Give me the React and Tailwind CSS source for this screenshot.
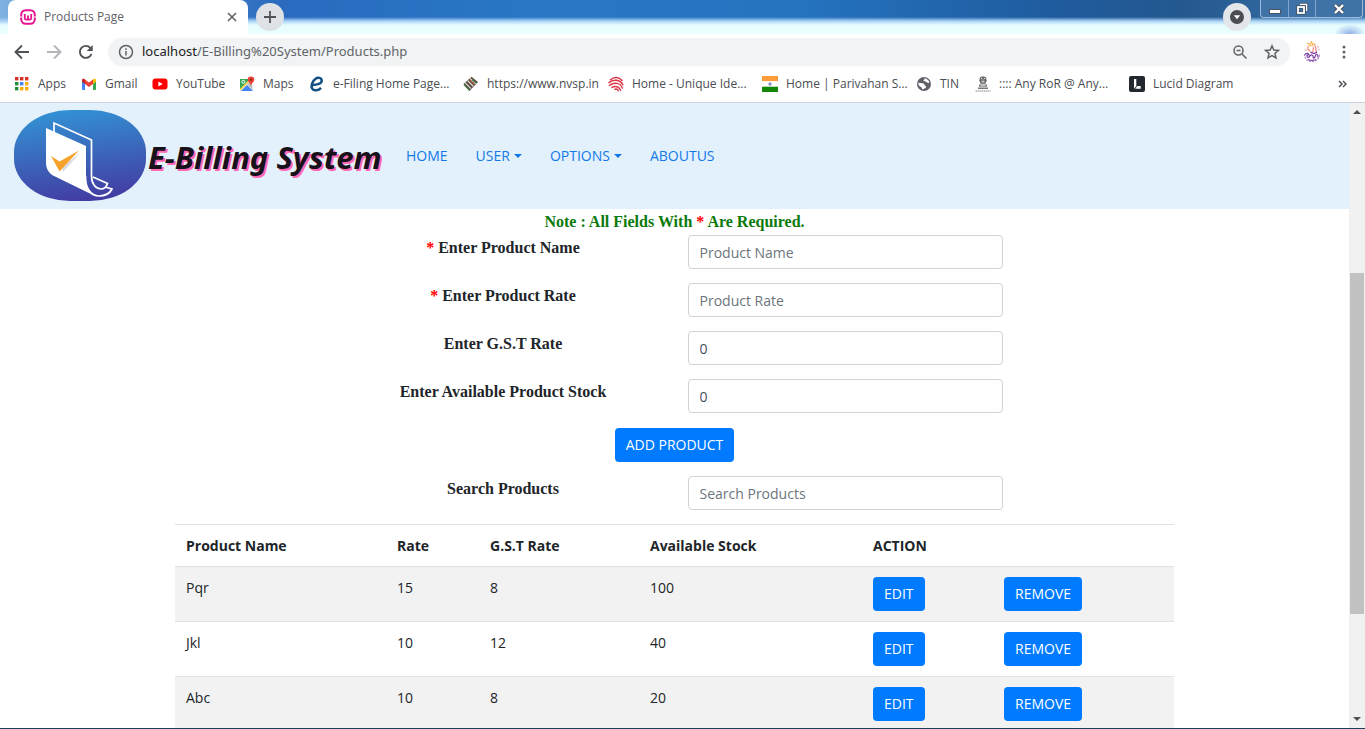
import React from "react";

const AppsIcon = () => (
  <svg viewBox="0 0 14 14" className="h-3.5 w-3.5">
    {["#d93025", "#d93025", "#d93025", "#1e8e3e", "#4285f4", "#f9ab00", "#1e8e3e", "#f9ab00", "#f9ab00"].map((c, i) => (
      <rect key={i} x={(i % 3) * 5} y={Math.floor(i / 3) * 5} width="3.4" height="3.4" fill={c} />
    ))}
  </svg>
);

const GmailIcon = () => (
  <svg viewBox="0 0 16 14" className="h-3.5 w-4">
    <path d="M1 3v9.2c0 .5.4.8.8.8H4V6z" fill="#4285f4" />
    <path d="M15 3v9.2c0 .5-.4.8-.8.8H12V6z" fill="#34a853" />
    <path d="M4 2.6V7l4 3 4-3V2.6L8 5.6z" fill="#ea4335" />
    <path d="M1 3v1.7L4 7V2.6l-.6-.5C2.4 1.3 1 1.9 1 3z" fill="#c5221f" />
    <path d="M15 3v1.7L12 7V2.6l.6-.5C13.6 1.3 15 1.9 15 3z" fill="#fbbc04" />
  </svg>
);

const YouTubeIcon = () => (
  <svg viewBox="0 0 16 12" className="h-3 w-4">
    <rect x="0.5" y="0.5" width="15" height="11" rx="3" fill="#f00" />
    <path d="M6.4 3.6v4.8l4.2-2.4z" fill="#fff" />
  </svg>
);

const MapsIcon = () => (
  <svg viewBox="0 0 16 16" className="h-4 w-4">
    <path d="M1 3h12v12H1z" fill="#e8eaed" />
    <path d="M1 3h10L1 13.5z" fill="#34a853" />
    <path d="M2 15 8 9l6 6z" fill="#4285f4" />
    <path d="M8 8.5 12.5 5 14 14z" fill="#bdc1c6" />
    <path d="M1 14 12 3" stroke="#fbd04b" strokeWidth="1.6" />
    <circle cx="4.3" cy="5.8" r="1.5" fill="none" stroke="#fff" />
    <path d="M12 .5a3.3 3.3 0 0 0-3.3 3.3C8.7 6 11.5 7 12 10c.5-3 3.3-4 3.3-6.2A3.3 3.3 0 0 0 12 .5z" fill="#ea4335" />
    <circle cx="12" cy="3.8" r="1.1" fill="#8c1d18" />
  </svg>
);

const EFilingIcon = () => (
  <svg viewBox="0 0 16 16" className="h-4 w-4">
    <path d="M3.5 9C8 9 12.800 7.700 12.700 4.600 12.600 1.500 8.800 1 6.300 3 3.300 5.200 1.600 9.800 3.200 12.600c1.700 2.700 6.300 2 8.800-.8" fill="none" stroke="#124f82" strokeWidth="2.5" />
  </svg>
);

const NvspIcon = () => (
  <svg viewBox="0 0 16 16" className="h-4 w-4">
    <path d="M.5 8 8.5.8 15 6 6.5 15z" fill="#5b5048" />
    <path d="M2 6.6 8 12.6M4.5 4.500l6 6M7 2.400l6 5.600" stroke="#e6e2da" strokeWidth="1.1" />
    <path d="m1 8.600 5.500 5.800M9 3.500l4 3.600" stroke="#3f7d46" strokeWidth="1.2" />
    <path d="m6.500 3.500 5 5" stroke="#d1492e" />
  </svg>
);

const AadhaarIcon = () => (
  <svg viewBox="0 0 16 16" className="h-4 w-4" fill="none" stroke="#dc3545" strokeWidth="1.5" strokeLinecap="round">
    <path d="M2.500 3.800C6 .5 11 .8 14 4.400M1 6.600C5.500 2.800 11.800 3.600 14.800 8.600M1.500 9.300C6.500 5.800 12.300 6.800 14.300 12M4 11.400c3.500-2 7.300-.6 8.500 2.800M7 13.200c1.600-.6 2.600 0 3.200 1.500" />
  </svg>
);

const FlagIcon = () => (
  <svg viewBox="0 0 16 16" className="h-4 w-4">
    <path d="M0 0h16v5.300H0z" fill="#ff9d3c" />
    <path d="M0 5.300h16v5.400H0z" fill="#fff" />
    <path d="M0 10.700h16V16H0z" fill="#138808" />
    <circle cx="8" cy="8" r="1.7" fill="#8a8fc4" />
  </svg>
);

const GlobeIcon = () => (
  <svg viewBox="0 0 16 16" className="h-4 w-4">
    <circle cx="8" cy="8" r="7" fill="#5f6368" />
    <path d="M2.300 6.500C4 7.600 6 6.700 7.600 7.500c1.500.8.3 2 1.800 2.300 1.200.2.9 1.800-.2 2.400-1.300.6-2.200 1.200-3.200.9.2-1.500-.8-2-2-2.600C2.800 9.900 2 8 2.300 6.500zM8.500 2.300c.3 1.500-1.300 1.600-.8 2.700.6 1 2.200.2 3.100 1.200.7.800 1.600.8 2.600.6C13 4.500 11 2.600 8.500 2.300z" fill="#fff" />
  </svg>
);

const EmblemIcon = () => (
  <svg viewBox="0 0 16 16" className="h-4 w-4">
    <path d="M5 1.500C6 .3 10 .3 11 1.500l.7 3-1.200 3.200h-5L4.300 4.500z" fill="#6c6c6c" />
    <path d="M6 2.500h1M9 2.500h1M7.500 4h1M6.500 5.800h3" stroke="#eee" />
    <path d="M4 8.500h8v2.300H4zM3 11.500h10V13H3z" fill="#777" />
    <path d="M5.500 9.700h5" stroke="#ddd" />
    <path d="M.5 15h15" stroke="#888" strokeDasharray="1.5 .5" />
  </svg>
);

const LucidIcon = () => (
  <svg viewBox="0 0 16 16" className="h-4 w-4">
    <rect width="16" height="16" rx="2" fill="#23272f" />
    <path d="M5 3h2.300v7L5 12.800zM8.200 10h3.500v2.800H6.200z" fill="#fff" />
  </svg>
);

const bookmarks = [
  { label: "Apps", Icon: AppsIcon, width: "w-[67px]" },
  { label: "Gmail", Icon: GmailIcon, width: "w-[71px]" },
  { label: "YouTube", Icon: YouTubeIcon, width: "w-[87px]" },
  { label: "Maps", Icon: MapsIcon, width: "w-[70px]" },
  { label: "e-Filing Home Page...", Icon: EFilingIcon, width: "w-[154px]" },
  { label: "https://www.nvsp.in", Icon: NvspIcon, width: "w-[145px]" },
  { label: "Home - Unique Ide...", Icon: AadhaarIcon, width: "w-[154px]" },
  { label: "Home | Parivahan S...", Icon: FlagIcon, width: "w-[154px]" },
  { label: "TIN", Icon: GlobeIcon, width: "w-[59px]" },
  { label: ":::: Any RoR @ Any...", Icon: EmblemIcon, width: "w-[154px]" },
  { label: "Lucid Diagram", Icon: LucidIcon, width: "w-[120px]" },
];

function TabStrip() {
  return (
    <div className="flex h-[34px] shrink-0 items-start justify-between bg-[radial-gradient(ellipse_16px_10px_at_1350px_34px,#8fb0e6,transparent),linear-gradient(to_bottom,#e6fdff00_17px,#a9d2f6_21px,#e6fdff_25px,#eaffff_33px),linear-gradient(to_right,#7fb0e0_0,#2a6bbf_280px,#2878c6_560px,#2573bf_800px,#1f5c9f_1050px,#24588f_1180px,#3c74aa_1365px)]">
      <div className="flex items-start pl-2">
        <div className="flex h-[34px] w-60 items-center rounded-t-lg bg-white pr-2.5 pl-3">
          <svg viewBox="0 0 16 16" className="h-4 w-4" fill="none" stroke="#e6128f">
            <rect x="1.2" y="1.2" width="13.6" height="13.6" rx="4.5" strokeWidth="2" />
            <path d="M4.800 5v4.200c0 2 3.200 2 3.200 0V6.500M8 9.200c0 2 3.200 2 3.200 0V5" strokeWidth="1.8" />
            <path d="M0 8h2.500M13.500 8H16" stroke="#fff" strokeWidth="1" />
          </svg>
          <span className="ml-2 flex-1 text-xs text-[#5f6368]">Products Page</span>
          <button aria-label="Close tab" className="flex h-3 w-3 items-center justify-center">
            <svg viewBox="0 0 10 10" className="h-2.5 w-2.5" stroke="#5f6368" strokeWidth="1.6">
              <path d="m1 1 8 8M9 1 1 9" />
            </svg>
          </button>
        </div>
        <button aria-label="New tab" className="mt-[3px] ml-2 flex h-7 w-7 items-center justify-center rounded-full bg-[#dee1e6]">
          <svg viewBox="0 0 12 12" className="h-3 w-3" stroke="#50545a" strokeWidth="1.8">
            <path d="M6 0v12M0 6h12" />
          </svg>
        </button>
      </div>
      <div className="flex items-start pr-0.5">
        <button aria-label="Search tabs" className="mt-[3px] mr-[9px] flex h-7 w-7 items-center justify-center rounded-full bg-[#e4e7ea]">
          <svg viewBox="0 0 14 14" className="h-3.5 w-3.5">
            <circle cx="7" cy="7" r="7" fill="#4a4d51" />
            <path d="M3.800 5.300h6.400L7 9.300z" fill="#fff" />
          </svg>
        </button>
        <div className="flex h-[18px] divide-x divide-[#7fa5cc] rounded-b border border-t-0 border-[#9dbbd9] bg-[#3f73a8]">
          <button aria-label="Minimize" className="flex w-7 items-center justify-center">
            <svg viewBox="0 0 12 12" className="h-3 w-3"><rect x=".5" y="6.5" width="11" height="4" fill="#fff" stroke="#4a5562" /></svg>
          </button>
          <button aria-label="Restore" className="flex w-[27px] items-center justify-center">
            <svg viewBox="0 0 12 12" className="h-3 w-3" fill="none">
              <path d="M4 1.500h6.500V8" stroke="#44505e" strokeWidth="3" /><path d="M4 1.500h6.500V8" stroke="#fff" strokeWidth="1.5" />
              <rect x="2" y="4" width="6" height="6" stroke="#44505e" strokeWidth="3.4" /><rect x="2" y="4" width="6" height="6" stroke="#fff" strokeWidth="1.8" />
            </svg>
          </button>
          <button aria-label="Close" className="flex w-[46px] items-center justify-center">
            <svg viewBox="0 0 12 12" className="h-3 w-3"><path d="m2 2 8 8M10 2l-8 8" stroke="#44505e" strokeWidth="4.2" /><path d="m2 2 8 8M10 2l-8 8" stroke="#fff" strokeWidth="2.4" /></svg>
          </button>
        </div>
      </div>
    </div>
  );
}

function Toolbar() {
  return (
    <div className="flex h-9 shrink-0 items-center bg-white pr-[13px] pl-3.5">
      <div className="flex gap-4">
        <button aria-label="Back"><svg viewBox="0 0 16 16" className="h-4 w-4" fill="none" stroke="#505357" strokeWidth="1.9"><path d="M15 8H2M8 1.500 1.500 8 8 14.500" /></svg></button>
        <button aria-label="Forward"><svg viewBox="0 0 16 16" className="h-4 w-4" fill="none" stroke="#b4b6b9" strokeWidth="1.9"><path d="M1 8h13M8 1.500 14.500 8 8 14.500" /></svg></button>
        <button aria-label="Reload"><svg viewBox="0 0 16 16" className="h-4 w-4" fill="none" stroke="#505357" strokeWidth="1.9"><path d="M13.500 10A6 6 0 1 1 12.300 3.800L14 5.500" /><path d="M14.700 1v6h-6z" fill="#505357" stroke="none" /></svg></button>
      </div>
      <div className="ml-3.5 flex h-7 flex-1 items-center rounded-full bg-[#f1f3f4] px-2.5">
        <svg viewBox="0 0 16 16" className="h-4 w-4 shrink-0" fill="none" stroke="#5f6368" strokeWidth="1.5"><circle cx="8" cy="8" r="6.5" /><path d="M8 7v4.500M8 4.300v1.600" /></svg>
        <div className="ml-2 flex-1 font-['Noto_Sans',sans-serif] text-[13px] text-[#5f6368]"><span className="text-[#202124]">localhost</span>/E-Billing%20System/Products.php</div>
        <button aria-label="Zoom" className="mr-4"><svg viewBox="0 0 16 16" className="h-4 w-4" fill="none" stroke="#5f6368" strokeWidth="1.5"><circle cx="6.5" cy="6.5" r="4.5" /><path d="M4.500 6.500h4M10 10l4.500 4.500" /></svg></button>
        <button aria-label="Bookmark this page"><svg viewBox="0 0 16 16" className="h-4 w-4" fill="none" stroke="#5f6368" strokeWidth="1.5"><path d="m8 1.800 1.800 4.200 4.600.4-3.500 3 1.100 4.500L8 11.500l-4 2.400 1.100-4.500-3.500-3 4.600-.4z" /></svg></button>
      </div>
      <button aria-label="Profile" className="ml-3">
        <svg viewBox="0 0 20 22" className="h-[22px] w-5" fill="none" strokeWidth="1.2">
          <path d="M5 2 8 3.500 9.500 1l1.500 2.500L14 3M6 5l5-.5" stroke="#f7b24f" />
          <path d="M6 5.500c-1 3 .5 4 2.500 4.500M12.500 4.500c2.500 2 .5 4.500 2 6.500M11 6c1.500 2-1 3.500 0 5.500" stroke="#f0877a" />
          <path d="M3 8.500l1.500 1M15.500 5l1 1.500M16.500 9l1.500-.5" stroke="#e9a3b8" />
          <path d="M2.500 13c-.5 4 3 7.500 7.500 7.500s8-3.500 7.500-8" stroke="#b085cc" strokeDasharray="2 1" />
          <path d="M3 13.500c2-2 3.500-1 4 .5-2-1-3 1.500-1 2.500 2 0 2-3 4-2.500s.5 3.500 2 3 1-4 3-3.500 0 3 1.500 2.500M6 18.500c2.500 1.500 5.500 1 8 0M8.500 11c2 2 5 1.500 6.500 0" stroke="#7c3aa6" />
        </svg>
      </button>
      <button aria-label="Menu" className="ml-3.5 flex w-4 justify-center">
        <svg viewBox="0 0 4 14" className="h-3.5 w-1" fill="#5f6368"><circle cx="2" cy="2" r="1.5" /><circle cx="2" cy="7" r="1.5" /><circle cx="2" cy="12" r="1.5" /></svg>
      </button>
    </div>
  );
}

function BookmarkBar() {
  return (
    <nav aria-label="Bookmarks" className="flex h-[33px] shrink-0 items-start border-b border-[#ccd5de] bg-white pr-[18px] pl-3.5 text-xs text-[#4a4d51]">
      {bookmarks.map(({ label, Icon, width }) => (
        <a key={label} href="#" className={`flex h-7 shrink-0 items-center whitespace-nowrap ${width}`}>
          <span className="mr-2 flex w-4 shrink-0 justify-center"><Icon /></span>
          {label}
        </a>
      ))}
      <button aria-label="More bookmarks" className="ml-auto flex h-7 items-center">
        <svg viewBox="0 0 9 8" className="h-2 w-[9px]" fill="none" stroke="#505357" strokeWidth="1.5"><path d="m1 1 3 3-3 3M5 1l3 3-3 3" /></svg>
      </button>
    </nav>
  );
}

function Logo() {
  return (
    <svg viewBox="0 0 132 91" className="h-[91px] w-[132px]">
      <defs>
        <linearGradient id="logo-bg" x1="0.4" y1="0" x2="0.6" y2="1">
          <stop offset="0" stopColor="#3391d3" />
          <stop offset="1" stopColor="#433ba1" />
        </linearGradient>
      </defs>
      <rect width="132" height="91" rx="56" ry="42" fill="url(#logo-bg)" />
      <path d="M40 22V13L77.500 30V66C77.500 74 82 79 87 79 91 79 92.500 77 93.500 73.500L79 67" fill="none" stroke="#fff" strokeWidth="1.7" />
      <path d="M32 18 72 36V68C72 77 75 84 81 86L38 65C34 62 32 58 32 53z" fill="#fff" />
      <path d="M71.500 66C71 78 77 86 85 86 91 86 96 83 98 79L91 77" fill="none" stroke="#fff" strokeWidth="1.7" />
      <path d="M48 57 66 43 49 62z" fill="#c9ccd4" opacity=".7" />
      <path d="M37 46 45.500 51.500 65 40.500 45.500 61.500z" fill="#f7a32b" />
    </svg>
  );
}

const Caret = () => (
  <svg viewBox="0 0 8 4" className="h-1 w-2" fill="currentColor"><path d="M0 0h8L4 4z" /></svg>
);

function Navbar() {
  return (
    <header className="flex h-[106px] shrink-0 items-center bg-[#e3f1fd] pl-3.5 text-sm text-[#1279e8]">
      <a href="#" className="flex items-center pb-0.5">
        <Logo />
        <span className="w-[260px] pt-1 pl-0.5 font-['Noto_Sans',sans-serif] text-[31px] leading-10 font-bold whitespace-nowrap text-[#17111b] italic [text-shadow:2px_2px_0_#ff69b4]">E-Billing System</span>
      </a>
      <nav className="flex gap-7">
        <a href="#">HOME</a>
        <button className="flex items-center gap-1">USER <Caret /></button>
        <button className="flex items-center gap-1">OPTIONS <Caret /></button>
        <a href="#">ABOUTUS</a>
      </nav>
    </header>
  );
}

const fields = [
  { id: "name", label: "Enter Product Name", required: true, placeholder: "Product Name" },
  { id: "rate", label: "Enter Product Rate", required: true, placeholder: "Product Rate" },
  { id: "gst", label: "Enter G.S.T Rate", value: "0" },
  { id: "stock", label: "Enter Available Product Stock", value: "0" },
];

function Field({ id, label, required, placeholder, value }) {
  return (
    <div className="grid grid-cols-2 items-start">
      <label htmlFor={id} className="text-center font-['Liberation_Serif',serif] text-base leading-[26px] font-bold">
        {required && <span className="text-[#f00]">* </span>}
        {label}
      </label>
      <div className="pr-[15px] pl-[13px]">
        <input id={id} placeholder={placeholder} defaultValue={value} className="h-[34px] w-full rounded-sm border border-[#ced4da] bg-white px-[11px] text-sm text-[#495057] placeholder:text-[#6c757d]" />
      </div>
    </div>
  );
}

const buttonStyle = "h-[34px] rounded-sm bg-[#007bff] px-[11px] text-sm text-white";

const products = [
  ["Pqr", "15", "8", "100"],
  ["Jkl", "10", "12", "40"],
  ["Abc", "10", "8", "20"],
];

function ProductTable() {
  return (
    <table className="mx-auto mt-3.5 w-[999px] table-fixed border-separate border-spacing-0 text-left text-sm leading-[22px]">
      <colgroup>
        <col className="w-[211px]" />
        <col className="w-[93px]" />
        <col className="w-40" />
        <col className="w-[223px]" />
        <col className="w-[131px]" />
        <col />
      </colgroup>
      <thead>
        <tr>
          {["Product Name", "Rate", "G.S.T Rate", "Available Stock", "ACTION", ""].map((h) => (
            <th key={h} className="h-[42px] border-t border-[#dee2e6] px-[11px] font-bold">{h}</th>
          ))}
        </tr>
      </thead>
      <tbody>
        {products.map((row) => (
          <tr key={row[0]} className="odd:bg-[#f2f2f2]">
            {row.map((cell, i) => (
              <td key={i} className="border-t border-[#dee2e6] px-[11px] py-2.5 align-top">{cell}</td>
            ))}
            <td className="border-t border-[#dee2e6] px-[11px] py-2.5 align-top"><button className={`block ${buttonStyle}`}>EDIT</button></td>
            <td className="border-t border-[#dee2e6] px-[11px] py-2.5 align-top"><button className={`block ${buttonStyle}`}>REMOVE</button></td>
          </tr>
        ))}
      </tbody>
    </table>
  );
}

function Scrollbar() {
  return (
    <div className="flex w-4 shrink-0 flex-col items-center bg-[#f1f1f1]">
      <svg viewBox="0 0 8 4" className="mt-[7px] h-1 w-2" fill="#505050"><path d="M4 0l4 4H0z" /></svg>
      <div className="w-full flex-[159]" />
      <div className="w-3.5 flex-[341] bg-[#c1c1c1]" />
      <div className="w-full flex-[103]" />
      <svg viewBox="0 0 8 4" className="mb-[7px] h-1 w-2" fill="#505050"><path d="M0 0h8L4 4z" /></svg>
    </div>
  );
}

export default function App() {
  return (
    <div className="flex h-screen flex-col overflow-hidden border-b border-[#1f3f5c] bg-white font-['Open_Sans',sans-serif] text-[#212529]">
      <TabStrip />
      <Toolbar />
      <BookmarkBar />
      <div className="flex min-h-0 flex-1">
        <div className="min-w-0 flex-1 overflow-hidden">
          <Navbar />
          <main>
            <p className="text-center font-['Liberation_Serif',serif] text-base leading-[26px] font-bold text-[#0b7a0b]">
              Note : All Fields With <span className="text-[#f00]">*</span> Are Required.
            </p>
            <div className="mx-auto w-[686px] max-w-full">
              <form className="grid gap-3.5" onSubmit={(e) => e.preventDefault()}>
                {fields.map((f) => <Field key={f.id} {...f} />)}
                <div className="mt-px text-center"><button className={buttonStyle}>ADD PRODUCT</button></div>
                <Field id="search" label="Search Products" placeholder="Search Products" />
              </form>
            </div>
            <ProductTable />
          </main>
        </div>
        <Scrollbar />
      </div>
    </div>
  );
}
